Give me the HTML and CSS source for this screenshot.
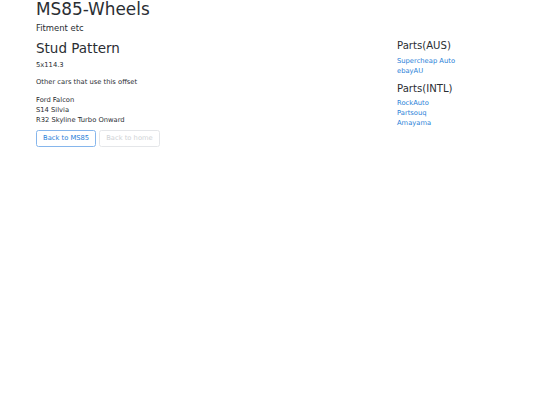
FILE: index.html
```html
<!DOCTYPE html>
<html lang="en">
<head>
    <meta charset="UTF-8">
    <title>MS85-Wheels</title>
    <link rel="stylesheet" href="styles.css">
</head>
<body>
    <div class="container">
        <h1 class="site-title">MS85-Wheels</h1>
        <p class="lead">Fitment etc</p>
        <div class="row">
            <div class="main">
                <h2>Stud Pattern</h2>
                <p>5x114.3</p>
                <p>Other cars that use this offset</p>
                <p class="cars">Ford Falcon<br>S14 Silvia<br>R32 Skyline Turbo Onward</p>
                <div class="buttons">
                    <a class="btn btn-primary" href="#">Back to MS85</a>
                    <a class="btn btn-disabled" href="#">Back to home</a>
                </div>
            </div>
            <div class="sidebar">
                <h4>Parts(AUS)</h4>
                <ul class="links">
                    <li><a href="#">Supercheap Auto</a></li>
                    <li><a href="#">ebayAU</a></li>
                </ul>
                <h4>Parts(INTL)</h4>
                <ul class="links">
                    <li><a href="#">RockAuto</a></li>
                    <li><a href="#">Partsouq</a></li>
                    <li><a href="#">Amayama</a></li>
                </ul>
            </div>
        </div>
    </div>
</body>
</html>
```

FILE: styles.css
```css
html {
    font-size: 6.75px;
}

body {
    font-family: "DejaVu Sans", sans-serif;
    font-size: 1rem;
    line-height: 1.5;
    color: #2a2e33;
    background-color: #fff;
    margin: 0;
    padding: 0;
}

.container {
    padding: 0 36px;
}

.row {
    display: grid;
    grid-template-columns: 361px 1fr;
}

h1, h2, h4 {
    font-weight: normal;
    line-height: 1.2;
    margin: 0 0 0.5rem;
}

.site-title {
    font-size: 2.5rem;
    margin: -1px 0 2.4px;
}

h2 {
    font-size: 2rem;
}

h4 {
    font-size: 1.5rem;
}

p {
    margin: 0 0 7.4px;
}

.lead {
    font-size: 1.25rem;
    margin-bottom: 5.75px;
}

.cars {
    margin-bottom: 4.5px;
}

.links {
    list-style: none;
    margin: 0 0 1rem;
    padding: 0;
}

a {
    color: #2a7fd8;
    text-decoration: none;
}

.buttons {
    display: flex;
    gap: 3px;
}

.btn {
    display: inline-block;
    padding: 0.375rem 6px;
    border: 1px solid #86b6ec;
    border-radius: 2.5px;
    line-height: 1.5;
}

.btn-disabled {
    color: #cfd3d6;
    border-color: #e4e6e9;
}
```
